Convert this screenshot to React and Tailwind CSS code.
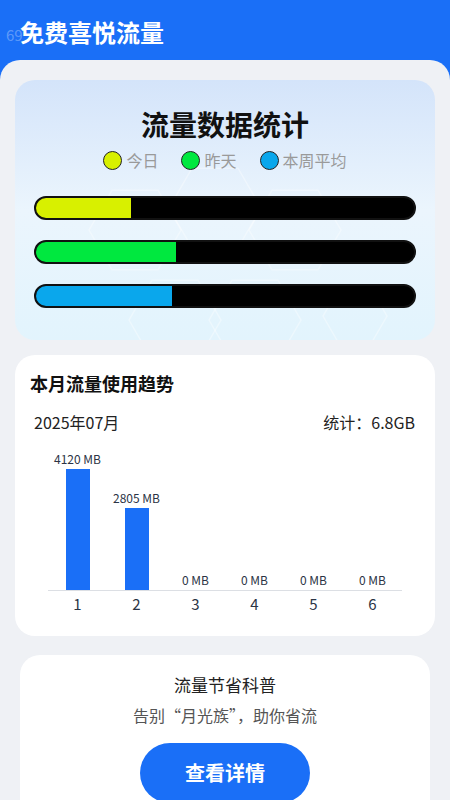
import React from "react";

const bars = [
  { color: "#d8f000", pct: 96 / 380 },
  { color: "#00e83f", pct: 141 / 380 },
  { color: "#0aa7ec", pct: 137 / 380 },
];

const legend = [
  { color: "#d8f000", label: "今日" },
  { color: "#00e83f", label: "昨天" },
  { color: "#0aa7ec", label: "本周平均" },
];

const chart = [
  { day: "1", mb: 4120 },
  { day: "2", mb: 2805 },
  { day: "3", mb: 0 },
  { day: "4", mb: 0 },
  { day: "5", mb: 0 },
  { day: "6", mb: 0 },
];

function Hex({ cx, cy, r }) {
  const pts = [];
  for (let i = 0; i < 6; i++) {
    const a = (Math.PI / 3) * i;
    pts.push(`${cx + r * Math.cos(a)},${cy + r * Math.sin(a)}`);
  }
  return <polygon points={pts.join(" ")} fill="none" stroke="#ffffff" strokeOpacity="0.35" strokeWidth="1.5" />;
}

export default function App() {
  const font = { fontFamily: '"Noto Sans CJK SC", "Noto Sans", sans-serif' };
  return (
    <div className="w-[450px] h-[800px] overflow-hidden bg-[#1a6ff7] relative" style={font}>
      <div className="relative h-[60px] flex items-center pl-[20px] pt-[4px]">
        <span className="absolute left-[6px] top-[24px] text-[15px] text-white/30">69</span>
        <span className="relative text-white text-[24px] font-bold leading-none">免费喜悦流量</span>
      </div>
      <div className="bg-[#eff1f5] rounded-t-[20px] h-[740px] pt-[20px] flex flex-col">
        {/* Card 1 */}
        <div className="relative shrink-0 mx-[15px] h-[260px] rounded-[20px] overflow-hidden bg-gradient-to-b from-[#d4e4fa] via-[#ebf5fd] to-[#e2f4fd]">
          <svg className="absolute inset-0" width="420" height="260" viewBox="0 0 420 260">
            <Hex cx={120} cy={150} r={46} />
            <Hex cx={200} cy={128} r={46} />
            <Hex cx={280} cy={150} r={46} />
            <Hex cx={160} cy={240} r={46} />
            <Hex cx={240} cy={240} r={46} />
            <Hex cx={340} cy={236} r={32} />
          </svg>
          <div className="relative flex flex-col items-center pt-[26px]">
            <div className="text-[28px] leading-[36px] font-bold text-[#111]">流量数据统计</div>
            <div className="mt-[6px] h-[24px] flex items-center gap-[23px]">
              {legend.map((l) => (
                <div key={l.label} className="flex items-center gap-[4px]">
                  <span
                    className="w-[19px] h-[19px] rounded-full border-[1.5px] border-[#222]"
                    style={{ backgroundColor: l.color }}
                  />
                  <span className="text-[16px] leading-[24px] text-[#9a9a9a]">{l.label}</span>
                </div>
              ))}
            </div>
            <div className="mt-[24px] w-full px-[19px] flex flex-col gap-[20px]">
              {bars.map((b, i) => (
                <div key={i} className="h-[24px] rounded-full bg-black border-[2px] border-[#111] overflow-hidden flex">
                  <div className="h-full" style={{ width: `${b.pct * 100}%`, backgroundColor: b.color }} />
                </div>
              ))}
            </div>
          </div>
        </div>

        {/* Card 2 */}
        <div className="shrink-0 mx-[15px] mt-[15px] h-[281px] rounded-[20px] bg-white flex flex-col pt-[18px]">
          <div className="pl-[15px] text-[18px] leading-[20px] font-bold text-[#111]">本月流量使用趋势</div>
          <div className="mt-[18px] pl-[19px] pr-[20px] flex justify-between text-[16px] leading-[22px] text-[#222]">
            <span>2025年07月</span>
            <span>统计：6.8GB</span>
          </div>
          <div className="mt-[8px] mx-[33px] h-[150px] flex items-end border-b border-[#dcdfe4]">
            {chart.map((c) => (
              <div key={c.day} className="flex-1 flex flex-col items-center justify-end">
                <span className="text-[12px] leading-[14px] text-[#2b3445] mb-[3px]">{c.mb} MB</span>
                <div className="w-[24px] bg-[#1a6ff7]" style={{ height: `${(c.mb / 4120) * 121}px` }} />
              </div>
            ))}
          </div>
          <div className="mx-[33px] mt-[3px] flex">
            {chart.map((c) => (
              <span key={c.day} className="flex-1 text-center text-[15px] leading-[20px] text-[#2b3445]">
                {c.day}
              </span>
            ))}
          </div>
        </div>

        {/* Card 3 */}
        <div className="shrink-0 mx-[20px] mt-[19px] h-[200px] rounded-[20px] bg-white flex flex-col items-center pt-[18px]">
          <div className="text-[17px] leading-[24px] text-[#222]">流量节省科普</div>
          <div className="mt-[6px] text-[16px] leading-[24px] text-[#555]">告别“月光族”，助你省流</div>
          <div className="mt-[16px] w-[170px] h-[60px] rounded-full bg-[#1a6ff7] flex items-center justify-center">
            <span className="text-white text-[20px] font-bold">查看详情</span>
          </div>
        </div>
      </div>
    </div>
  );
}
